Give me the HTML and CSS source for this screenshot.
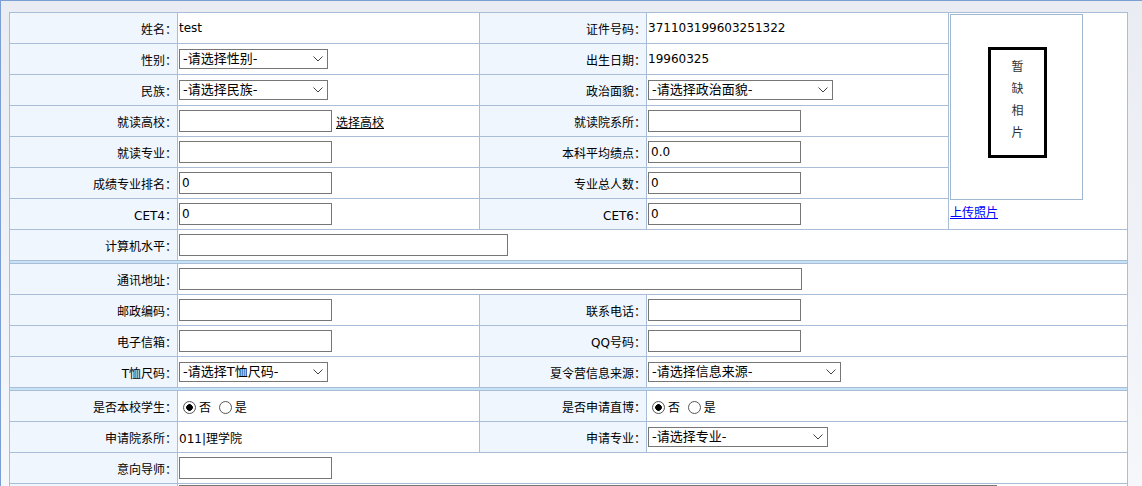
FILE: index.html
```html
<!DOCTYPE html>
<html lang="zh-CN">
<head>
<meta charset="utf-8">
<title>个人信息</title>
<link rel="stylesheet" href="styles.css">
</head>
<body>
<div class="page">
  <div class="form">
    <div class="lbl">姓名：</div>
    <div class="val">test</div>
    <div class="lbl">证件号码：</div>
    <div class="val">371103199603251322</div>
    <div class="photo">
      <div class="photo-frame">
        <div class="photo-missing"><span>暂</span><span>缺</span><span>相</span><span>片</span></div>
      </div>
      <a class="upload" href="#">上传照片</a>
    </div>

    <div class="lbl">性别：</div>
    <div class="val"><span class="selwrap"><select class="sel w149"><option>-请选择性别-</option></select><svg class="chev" viewBox="0 0 10 6"><path d="M0.5 0.5 L5 5 L9.5 0.5"/></svg></span></div>
    <div class="lbl">出生日期：</div>
    <div class="val">19960325</div>

    <div class="lbl">民族：</div>
    <div class="val"><span class="selwrap"><select class="sel w149"><option>-请选择民族-</option></select><svg class="chev" viewBox="0 0 10 6"><path d="M0.5 0.5 L5 5 L9.5 0.5"/></svg></span></div>
    <div class="lbl">政治面貌：</div>
    <div class="val"><span class="selwrap"><select class="sel w185"><option>-请选择政治面貌-</option></select><svg class="chev" viewBox="0 0 10 6"><path d="M0.5 0.5 L5 5 L9.5 0.5"/></svg></span></div>

    <div class="lbl">就读高校：</div>
    <div class="val"><input class="txt" type="text"><a class="pick" href="#">选择高校</a></div>
    <div class="lbl">就读院系所：</div>
    <div class="val"><input class="txt" type="text"></div>

    <div class="lbl">就读专业：</div>
    <div class="val"><input class="txt" type="text"></div>
    <div class="lbl">本科平均绩点：</div>
    <div class="val"><input class="txt" type="text" value="0.0"></div>

    <div class="lbl">成绩专业排名：</div>
    <div class="val"><input class="txt" type="text" value="0"></div>
    <div class="lbl">专业总人数：</div>
    <div class="val"><input class="txt" type="text" value="0"></div>

    <div class="lbl">CET4：</div>
    <div class="val"><input class="txt" type="text" value="0"></div>
    <div class="lbl">CET6：</div>
    <div class="val"><input class="txt" type="text" value="0"></div>

    <div class="lbl">计算机水平：</div>
    <div class="val span4"><input class="txt w329" type="text"></div>

    <div class="sep"></div>

    <div class="lbl">通讯地址：</div>
    <div class="val span4"><input class="txt w623" type="text"></div>

    <div class="lbl">邮政编码：</div>
    <div class="val"><input class="txt" type="text"></div>
    <div class="lbl">联系电话：</div>
    <div class="val span2"><input class="txt" type="text"></div>

    <div class="lbl">电子信箱：</div>
    <div class="val"><input class="txt" type="text"></div>
    <div class="lbl">QQ号码：</div>
    <div class="val span2"><input class="txt" type="text"></div>

    <div class="lbl">T恤尺码：</div>
    <div class="val"><span class="selwrap"><select class="sel w149"><option>-请选择T恤尺码-</option></select><svg class="chev" viewBox="0 0 10 6"><path d="M0.5 0.5 L5 5 L9.5 0.5"/></svg></span></div>
    <div class="lbl">夏令营信息来源：</div>
    <div class="val span2"><span class="selwrap"><select class="sel w193"><option>-请选择信息来源-</option></select><svg class="chev" viewBox="0 0 10 6"><path d="M0.5 0.5 L5 5 L9.5 0.5"/></svg></span></div>

    <div class="sep"></div>

    <div class="lbl">是否本校学生：</div>
    <div class="val"><span class="radios"><input type="radio" name="local" checked>否 <input type="radio" name="local">是</span></div>
    <div class="lbl">是否申请直博：</div>
    <div class="val span2"><span class="radios"><input type="radio" name="phd" checked>否 <input type="radio" name="phd">是</span></div>

    <div class="lbl">申请院系所：</div>
    <div class="val">011|理学院</div>
    <div class="lbl">申请专业：</div>
    <div class="val span2"><span class="selwrap"><select class="sel w180"><option>-请选择专业-</option></select><svg class="chev" viewBox="0 0 10 6"><path d="M0.5 0.5 L5 5 L9.5 0.5"/></svg></span></div>

    <div class="lbl">意向导师：</div>
    <div class="val span4"><input class="txt" type="text"></div>

    <div class="lbl"></div>
    <div class="val span4 top"><textarea class="area"></textarea></div>
  </div>
</div>
</body>
</html>
```

FILE: styles.css
```css
* {
  box-sizing: border-box;
}

html,
body {
  margin: 0;
  height: 100%;
  overflow: hidden;
}

body {
  background: linear-gradient(#e9ecf2, #f5f7fb);
  font-family: "DejaVu Sans", "Noto Sans CJK SC", sans-serif;
  font-size: 12px;
  color: #000;
}

.page {
  border-top: 1px solid #7b9fd2;
  border-left: 1px solid #7b9fd2;
  padding: 11px 0 0 8px;
  height: 100%;
}

.form {
  display: grid;
  width: 1119px;
  grid-template-columns: 167px 301px 166px 301px 178px;
  grid-template-rows: repeat(8, 30px) 2px repeat(4, 30px) 2px repeat(4, 30px);
  gap: 1px;
  padding: 1px;
  background: #a9bed6;
}

.lbl {
  background: #eff6fe;
  display: flex;
  align-items: center;
  justify-content: flex-end;
  padding-right: 0;
  white-space: nowrap;
}

.val {
  background: #fff;
  display: flex;
  align-items: center;
  padding: 0 1px;
  white-space: nowrap;
}

.val.top {
  align-items: flex-start;
  padding-top: 1px;
}

.span2 {
  grid-column: span 2;
}

.span4 {
  grid-column: span 4;
}

.sep {
  grid-column: 1 / -1;
  background: #c6e2f7;
}

.photo {
  grid-column: 5;
  grid-row: span 7;
  background: #fff;
  padding: 1px;
  display: flex;
  flex-direction: column;
  align-items: flex-start;
}

.photo-frame {
  width: 133px;
  height: 186px;
  border: 1px solid #9fb7cf;
  padding: 32px 0 0 37px;
}

.photo-missing {
  width: 59px;
  height: 111px;
  border: 3px solid #000;
  display: flex;
  flex-direction: column;
  align-items: center;
  padding-top: 5px;
  color: #333;
  font-family: "Noto Sans CJK SC", sans-serif;
  font-size: 12px;
  line-height: 22px;
}

.upload {
  margin-top: 5px;
  color: #0000ff;
  text-decoration: underline;
  line-height: 17px;
}

.pick {
  margin-left: 4px;
  color: #000;
  text-decoration: underline;
}

.txt {
  width: 153px;
  height: 22px;
  margin: 0;
  border: 1px solid #767676;
  border-radius: 0;
  padding: 0 2px;
  font-family: "DejaVu Sans", "Noto Sans CJK SC", sans-serif;
  font-size: 12px;
  color: #000;
  background: #fff;
}

.w329 {
  width: 329px;
}

.w623 {
  width: 623px;
}

.selwrap {
  position: relative;
  display: inline-flex;
}

.sel {
  -webkit-appearance: none;
  appearance: none;
  height: 20px;
  margin: 0;
  border: 1px solid #767676;
  border-radius: 0;
  background: #fff;
  color: #000;
  font-family: "DejaVu Sans", "Noto Sans CJK SC", sans-serif;
  font-size: 13px;
  padding: 0 18px 0 3px;
  line-height: 18px;
}

.chev {
  position: absolute;
  right: 5px;
  top: 7px;
  width: 10px;
  height: 6px;
  fill: none;
  stroke: #444;
  stroke-width: 1;
  pointer-events: none;
}

.w149 {
  width: 149px;
}

.w185 {
  width: 185px;
}

.w193 {
  width: 193px;
}

.w180 {
  width: 180px;
}

.radios input {
  -webkit-appearance: none;
  appearance: none;
  margin: 0 3px 0 4px;
  width: 13px;
  height: 13px;
  border: 1px solid #555;
  border-radius: 50%;
  background: #fff;
  vertical-align: -2px;
}

.radios input:checked {
  background: radial-gradient(circle, #000 0 3px, #fff 3.6px);
}

.area {
  width: 818px;
  height: 60px;
  margin: 0;
  border: 1px solid #767676;
  border-radius: 0;
  resize: none;
}
```
